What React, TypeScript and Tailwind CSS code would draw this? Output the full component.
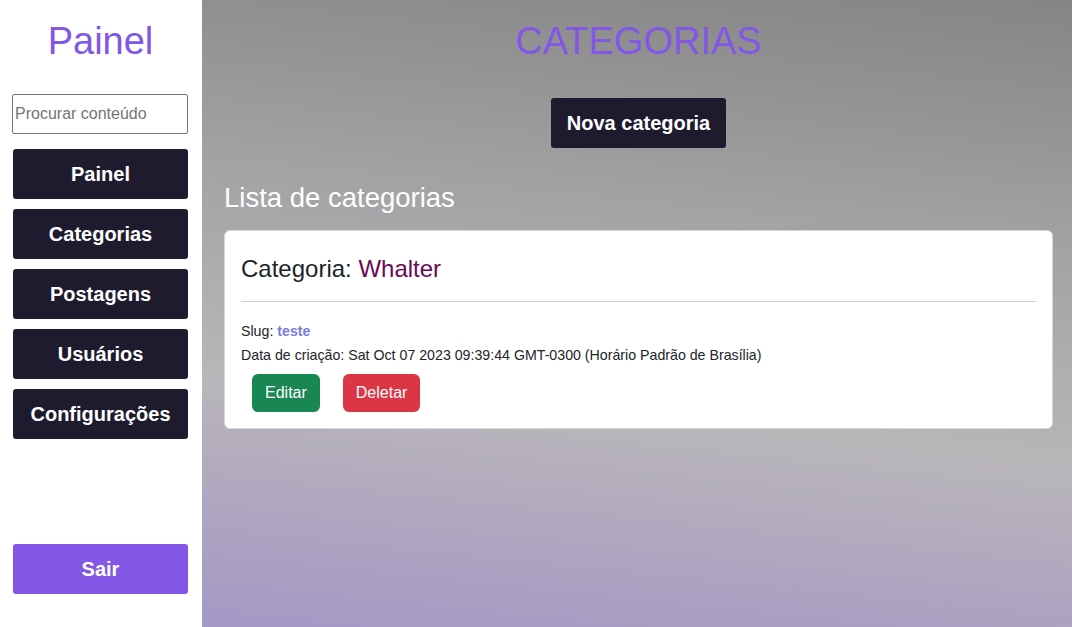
import React from "react";

const menu = ["Painel", "Categorias", "Postagens", "Usuários", "Configurações"];

export default function App() {
  return (
    <div className="flex h-[627px] w-[1072px] overflow-hidden font-['Liberation_Sans',Arial,sans-serif]">
      <aside className="flex h-full w-[202px] shrink-0 flex-col bg-white pl-[13px] pr-[14px]">
        <h1 className="mt-[22px] text-center text-[38px] leading-none text-[#8257e5]">
          Painel
        </h1>

        <input
          type="text"
          placeholder="Procurar conteúdo"
          className="-ml-px mt-[34px] h-[40px] w-[176px] rounded-[2px] border border-[#767676] px-[2px] text-[16px] text-black placeholder:text-[#757575] outline-none"
        />

        <nav className="mt-[15px] flex flex-col gap-[10px]">
          {menu.map((item) => (
            <button
              key={item}
              className="h-[50px] w-full rounded-[3px] bg-[#1f1b2f] text-[20px] font-bold text-white"
            >
              {item}
            </button>
          ))}
        </nav>

        <button className="mb-[33px] mt-auto h-[50px] w-full rounded-[3px] bg-[#8257e5] text-[20px] font-bold text-white">
          Sair
        </button>
      </aside>

      <main className="flex h-full flex-1 flex-col bg-[linear-gradient(186deg,#858585_0%,#a3a2a4_35%,#b9b6ba_65%,#a597c6_100%)] pl-[22px] pr-[19px]">
        <h1 className="mt-[22px] text-center text-[38px] leading-none text-[#8257e5]">
          CATEGORIAS
        </h1>

        <div className="mt-[38px] flex justify-center">
          <button className="h-[50px] rounded-[3px] bg-[#1f1b2f] px-[16px] text-[20px] font-bold text-white">
            Nova categoria
          </button>
        </div>

        <h2 className="mt-[36px] text-[27.5px] leading-none text-white">
          Lista de categorias
        </h2>

        <div className="mt-[18px] rounded-[6px] border border-[#d6d6d6] bg-white px-[16px] pb-[16px] pt-[26px]">
          <h3 className="text-[24px] leading-none text-[#212529]">
            Categoria: <span className="text-[#6a0a56]">Whalter</span>
          </h3>
          <hr className="mt-[20px] border-t border-[#cfcfcf]" />
          <div className="mt-[17px] text-[14.2px] leading-[24px] text-[#212529]">
            <p>
              Slug: <span className="font-bold text-[#7b7be0]">teste</span>
            </p>
            <p>
              Data de criação: Sat Oct 07 2023 09:39:44 GMT-0300 (Horário
              Padrão de Brasília)
            </p>
          </div>
          <div className="mt-[7px] flex gap-[23px] pl-[11px]">
            <button className="h-[38px] rounded-[6px] bg-[#198754] px-[13px] text-[16px] text-white">
              Editar
            </button>
            <button className="h-[38px] rounded-[6px] bg-[#dc3545] px-[13px] text-[16px] text-white">
              Deletar
            </button>
          </div>
        </div>
      </main>
    </div>
  );
}
